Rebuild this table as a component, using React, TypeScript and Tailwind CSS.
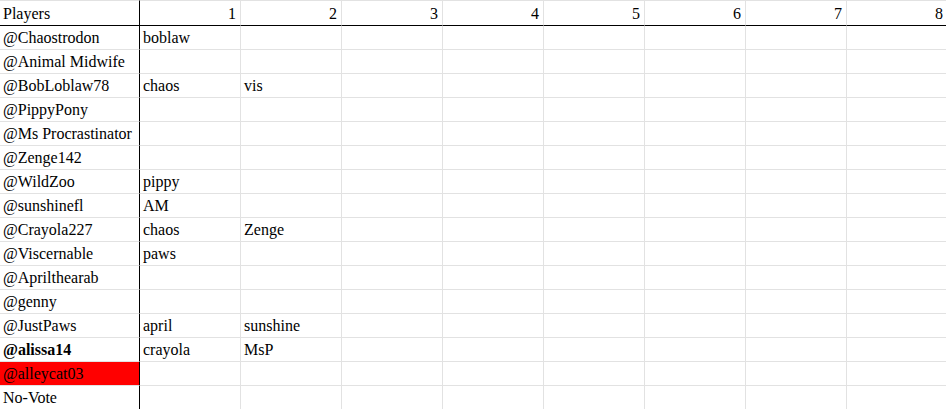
const players: { name: string; votes: string[]; bold?: boolean; red?: boolean }[] = [
  { name: '@Chaostrodon', votes: ['boblaw'] },
  { name: '@Animal Midwife', votes: [] },
  { name: '@BobLoblaw78', votes: ['chaos', 'vis'] },
  { name: '@PippyPony', votes: [] },
  { name: '@Ms Procrastinator', votes: [] },
  { name: '@Zenge142', votes: [] },
  { name: '@WildZoo', votes: ['pippy'] },
  { name: '@sunshinefl', votes: ['AM'] },
  { name: '@Crayola227', votes: ['chaos', 'Zenge'] },
  { name: '@Viscernable', votes: ['paws'] },
  { name: '@Aprilthearab', votes: [] },
  { name: '@genny', votes: [] },
  { name: '@JustPaws', votes: ['april', 'sunshine'] },
  { name: '@alissa14', votes: ['crayola', 'MsP'], bold: true },
  { name: '@alleycat03', votes: [], red: true },
  { name: 'No-Vote', votes: [] },
]

const days = [1, 2, 3, 4, 5, 6, 7, 8]

export default function App() {
  return (
    <div
      className="w-[946px] h-[409px] overflow-hidden bg-white text-black text-[16px] leading-[18px]"
      style={{ fontFamily: '"Liberation Serif", "Times New Roman", serif' }}
    >
      <div className="grid grid-cols-[140px_repeat(8,101px)] w-max">
        <div className="h-[26px] border-t border-b border-r border-t-[#e2e2e2] border-b-black border-r-black px-[3px] pt-[2px] flex items-center">
          Players
        </div>
        {days.map((d) => (
          <div
            key={d}
            className="h-[26px] border-t border-b border-r border-t-[#e2e2e2] border-b-black border-r-[#e2e2e2] px-[4px] pt-[2px] flex items-center justify-end"
          >
            {d}
          </div>
        ))}

        {players.map((p) => (
          <div key={p.name} className="contents">
            <div
              className={`h-[24px] border-b border-r border-b-[#e2e2e2] border-r-black px-[3px] pt-[1px] flex items-center whitespace-nowrap ${
                p.red ? 'bg-[#ff0000]' : ''
              } ${p.bold ? 'font-bold' : ''}`}
            >
              {p.name}
            </div>
            {days.map((d, i) => (
              <div
                key={d}
                className="h-[24px] border-b border-r border-[#e2e2e2] px-[3px] pt-[1px] flex items-center whitespace-nowrap"
              >
                {p.votes[i] ?? ''}
              </div>
            ))}
          </div>
        ))}
      </div>
    </div>
  )
}
